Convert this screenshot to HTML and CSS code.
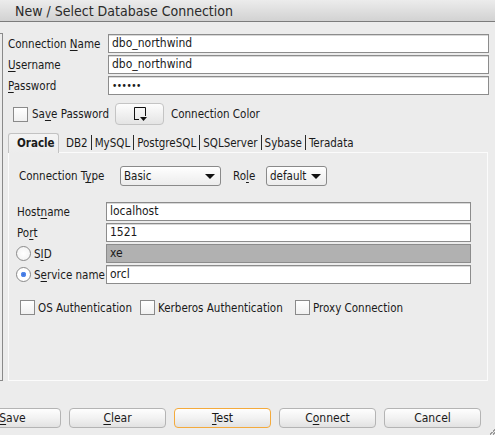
FILE: index.html
```html
<!DOCTYPE html>
<html lang="en">
<head>
    <meta charset="UTF-8">
    <title>New / Select Database Connection</title>
    <link rel="stylesheet" href="styles.css">
</head>
<body>
<div class="window">
    <div class="titlebar">New / Select Database Connection</div>

    <div class="body">
        <div class="side"></div>
        <div class="content">
            <div class="form">
                <label>Connection <u>N</u>ame</label>
                <div class="field">dbo_northwind</div>
                <label><u>U</u>sername</label>
                <div class="field">dbo_northwind</div>
                <label><u>P</u>assword</label>
                <div class="field dots">&bull;&bull;&bull;&bull;&bull;&bull;</div>
            </div>

            <div class="save-row">
                <span class="check"></span>
                <span class="save-label">Sa<u>v</u>e Password</span>
                <button class="color-btn">
                    <svg width="14" height="15" viewBox="0 0 14 15">
                        <path d="M1.5 14 V1.5 H12.5 V10" fill="none" stroke="#111" stroke-width="1"/>
                        <path d="M1 13.5 H6" fill="none" stroke="#111" stroke-width="1"/>
                        <path d="M7 11 H14 L10.5 15 Z" fill="#111"/>
                    </svg>
                </button>
                <span>Connection Color</span>
            </div>

            <div class="tabs">
                <span class="tab active">Oracle</span>
                <span class="tab">DB2</span><span class="sep"></span>
                <span class="tab">MySQL</span><span class="sep"></span>
                <span class="tab">PostgreSQL</span><span class="sep"></span>
                <span class="tab">SQLServer</span><span class="sep"></span>
                <span class="tab">Sybase</span><span class="sep"></span>
                <span class="tab">Teradata</span>
            </div>

            <div class="panel">
                <div class="type-row">
                    <span class="type-label">Connection T<u>y</u>pe</span>
                    <div class="select type-select">Basic<span class="arrow"></span></div>
                    <span class="role-label">Ro<u>l</u>e</span>
                    <div class="select role-select">default<span class="arrow"></span></div>
                </div>

                <div class="form inner">
                    <label>Host<u>n</u>ame</label>
                    <div class="field">localhost</div>
                    <label>Po<u>r</u>t</label>
                    <div class="field">1521</div>
                    <label class="radio-label"><span class="radio"></span>S<u>I</u>D</label>
                    <div class="field disabled">xe</div>
                    <label class="radio-label"><span class="radio on"></span>S<u>e</u>rvice name</label>
                    <div class="field">orcl</div>
                </div>

                <div class="auth-row">
                    <span class="check"></span><span class="auth-label os">OS Authentication</span>
                    <span class="check"></span><span class="auth-label krb">Kerberos Authentication</span>
                    <span class="check"></span><span class="auth-label">Proxy Connection</span>
                </div>
            </div>
        </div>
    </div>

    <div class="buttons">
        <button class="btn"><u>S</u>ave</button>
        <button class="btn"><u>C</u>lear</button>
        <button class="btn focus"><u>T</u>est</button>
        <button class="btn">C<u>o</u>nnect</button>
        <button class="btn">Cancel</button>
    </div>
    <div class="grip"></div>
</div>
</body>
</html>
```

FILE: styles.css
```css
body {
    margin: 0;
    background: #ececec;
    font-family: "DejaVu Sans Condensed", "DejaVu Sans", sans-serif;
    font-size: 11.5px;
    color: #1a1a1a;
}
u {
    text-decoration-thickness: 1px;
    text-underline-offset: 2px;
}
label,
span {
    white-space: nowrap;
}
.window {
    position: relative;
    width: 495px;
    height: 435px;
    overflow: hidden;
    display: flex;
    flex-direction: column;
}
.titlebar {
    height: 21px;
    line-height: 22px;
    padding-left: 15px;
    font-size: 14px;
    color: #2a2a2a;
    background: linear-gradient(#ececec, #d2d2d2);
    border-bottom: 1px solid #7c7c7c;
}
.body {
    display: flex;
}
.side {
    width: 2px;
    height: 346px;
    margin-top: 11px;
    border: 1px solid #8a8a8a;
    border-left: none;
}
.content {
    flex: 1;
    padding: 12px 6px 0 5px;
}
.form {
    display: grid;
    grid-template-columns: 100px 1fr;
    grid-auto-rows: 19px;
    row-gap: 2px;
    align-items: center;
}
.field {
    height: 17px;
    line-height: 17px;
    padding-left: 3px;
    font-size: 12px;
    background: #fff;
    border: 1px solid #8c8c8c;
    box-shadow: inset 0 1px 0 #d8d8d8;
}
.field.dots {
    font-size: 10px;
    letter-spacing: -0.5px;
}
.field.disabled {
    background: #b1b1b1;
    box-shadow: none;
}
.check {
    display: inline-block;
    flex: none;
    width: 13px;
    height: 13px;
    border: 1px solid #8a8a8a;
    background: linear-gradient(#ffffff, #f0f0f0);
    box-sizing: content-box;
}
.save-row {
    display: flex;
    align-items: center;
    height: 22px;
    margin-top: 8px;
    padding-left: 5px;
}
.save-label {
    width: 83px;
    margin-left: 4px;
}
.color-btn {
    flex: none;
    width: 49px;
    height: 22px;
    margin: 0 7px 0 0;
    padding: 2px 0 0;
    border: 1px solid #c4c4c4;
    border-radius: 4px;
    background: linear-gradient(#fdfdfd, #e4e4e4);
}
.tabs {
    display: flex;
    align-items: center;
    height: 19px;
    margin-top: 8px;
}
.tab {
    padding: 0 3px;
}
.tab.active {
    box-sizing: border-box;
    width: 51px;
    height: 20px;
    margin-right: 4px;
    padding: 2px 0 0 8px;
    align-self: flex-end;
    margin-bottom: -1px;
    font-weight: bold;
    border: 1px solid #c2c2c2;
    border-bottom: none;
    border-radius: 3px 3px 0 0;
    background: linear-gradient(#f4f4f4, #ececec);
}
.sep {
    width: 1px;
    height: 15px;
    background: #2a2a2a;
}
.panel {
    width: 478px;
    height: 227px;
    border: 1px solid #fbfbfb;
    box-sizing: content-box;
    padding: 0;
}
.type-row {
    display: flex;
    align-items: center;
    height: 20px;
    margin: 13px 0 0 10px;
}
.type-label {
    width: 101px;
}
.select {
    position: relative;
    box-sizing: border-box;
    height: 20px;
    line-height: 18px;
    padding-left: 3px;
    border: 1px solid #8a8a8a;
    border-radius: 3px;
    background: linear-gradient(#ffffff, #ececec);
}
.type-select {
    width: 101px;
}
.role-select {
    width: 61px;
}
.role-label {
    width: 33px;
    margin-left: 12px;
}
.arrow {
    position: absolute;
    right: 5px;
    top: 7px;
    border-left: 5px solid transparent;
    border-right: 5px solid transparent;
    border-top: 5px solid #111;
}
.form.inner {
    grid-template-columns: 89px 365px;
    margin: 16px 0 0 8px;
}
.radio-label {
    display: flex;
    align-items: center;
    margin-left: -1px;
}
.radio {
    flex: none;
    width: 13px;
    height: 13px;
    margin-right: 3px;
    border: 1px solid #8a8a8a;
    border-radius: 50%;
    background: radial-gradient(#ffffff, #f0f0f0);
    box-sizing: content-box;
}
.radio.on {
    background: radial-gradient(circle, #3b6fd8 0, #5b8ff0 2.5px, #ffffff 3px);
}
.auth-row {
    display: flex;
    align-items: center;
    margin: 16px 0 0 11px;
}
.auth-label {
    margin-left: 3px;
}
.auth-label.os {
    width: 102px;
}
.auth-label.krb {
    width: 137px;
}
.buttons {
    display: flex;
    gap: 8px;
    margin: 27px 0 0 -36px;
}
.btn {
    flex: none;
    width: 97px;
    height: 20px;
    padding: 0;
    font-family: inherit;
    font-size: 12px;
    color: #1a1a1a;
    border: 1px solid #b4b4b4;
    border-radius: 4px;
    background: linear-gradient(#fefefe, #f2f2f2 50%, #e2e2e2);
}
.btn.focus {
    border-color: #f4aa3c;
}
.grip {
    position: absolute;
    right: 0;
    bottom: 0;
    width: 6px;
    height: 6px;
    background: linear-gradient(135deg, transparent 50%, #9a9a9a 50%, #9a9a9a 60%, transparent 60%, transparent 75%, #9a9a9a 75%, #9a9a9a 85%, transparent 85%);
}
```
